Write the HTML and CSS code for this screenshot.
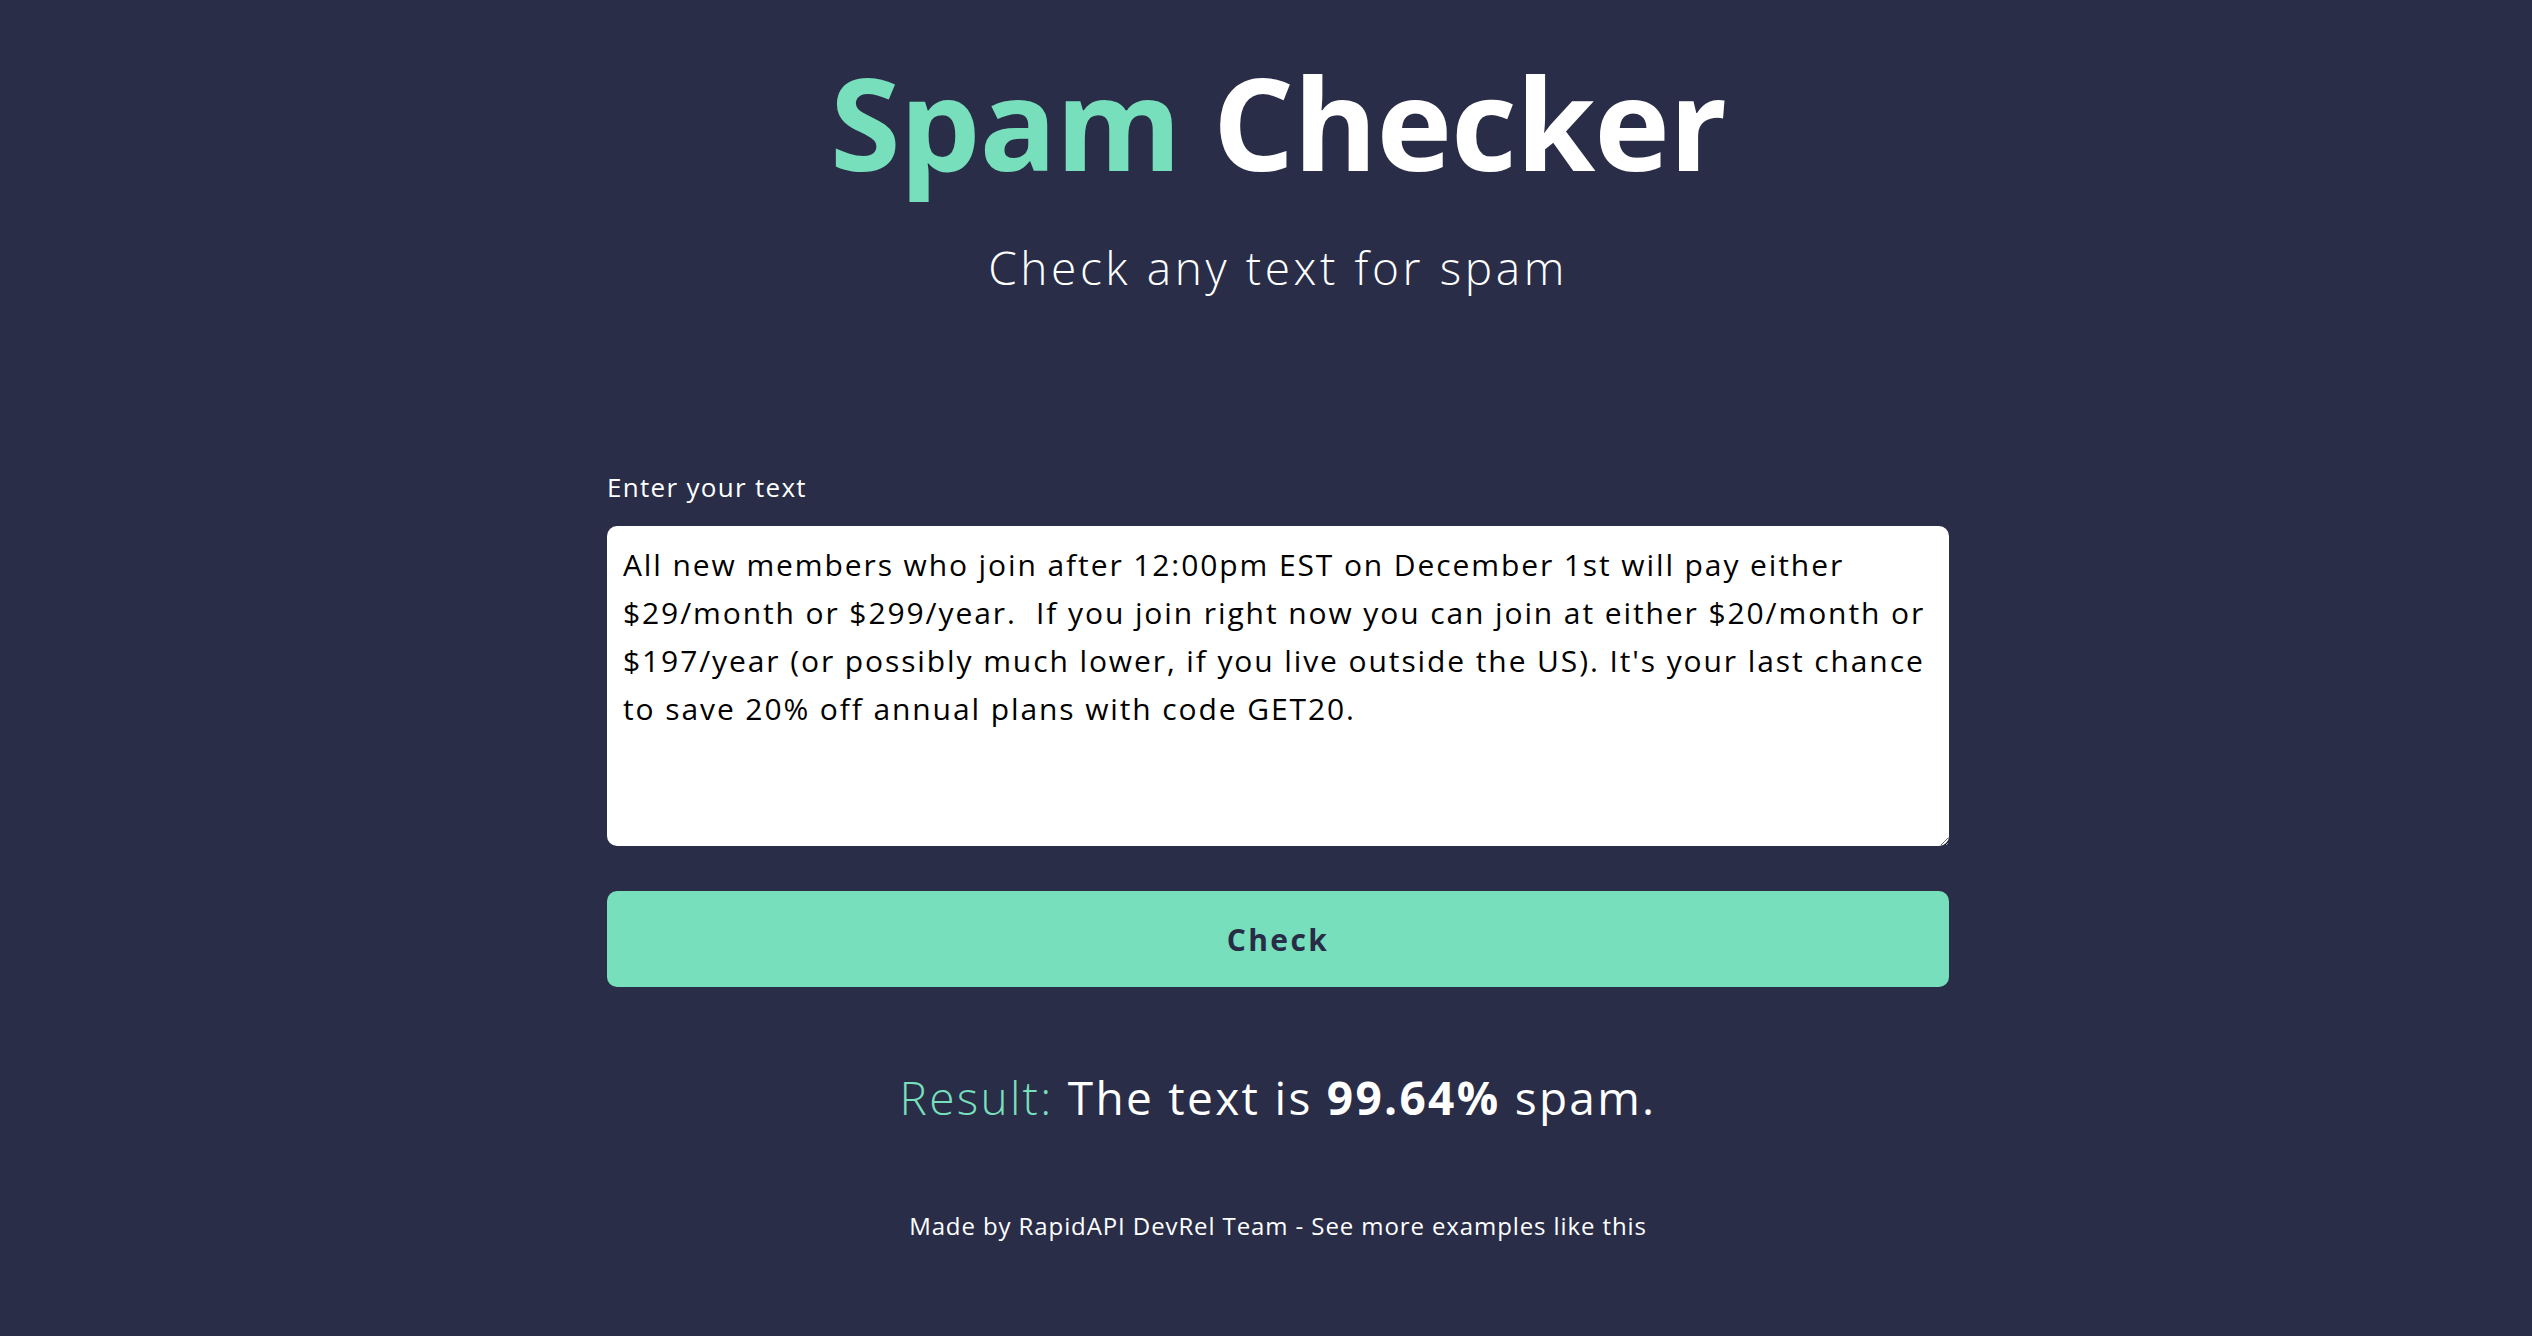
FILE: index.html
```html
<!DOCTYPE html>
<html lang="en">
<head>
<meta charset="utf-8">
<title>Spam Checker</title>
<link rel="stylesheet" href="styles.css">
</head>
<body>
<main class="page">
  <header class="hero">
    <h1 class="title"><span class="accent">Spam</span> Checker</h1>
    <p class="subtitle">Check any text for spam</p>
  </header>
  <form class="form">
    <label class="label" for="text">Enter your text</label>
    <textarea class="input" id="text">All new members who join after 12:00pm EST on December 1st will pay either $29/month or $299/year.  If you join right now you can join at either $20/month or $197/year (or possibly much lower, if you live outside the US). It's your last chance to save 20% off annual plans with code GET20.</textarea>
    <button class="button" type="button">Check</button>
  </form>
  <p class="result"><span class="accent">Result:</span> The text is <strong>99.64%</strong> spam.</p>
  <footer class="footer">Made by RapidAPI DevRel Team - See more examples like this</footer>
</main>
</body>
</html>
```

FILE: styles.css
```css
html, body {
  margin: 0;
  padding: 0;
  background: #292d47;
}
body {
  font-family: "Open Sans", "Noto Sans", sans-serif;
  color: #ffffff;
  min-height: 1336px;
}
.page {
  padding: 47px 0 0 24px;
  display: flex;
  flex-direction: column;
  align-items: center;
}
.hero {
  display: flex;
  flex-direction: column;
  align-items: center;
}
.title {
  margin: 0;
  font-size: 128px;
  line-height: 150px;
  font-weight: 700;
  letter-spacing: -1px;
}
.accent {
  color: #77dfbb;
}
.subtitle {
  margin: 40px 0 0;
  font-size: 46px;
  line-height: 60px;
  font-weight: 300;
  letter-spacing: 3.6px;
}
.form {
  width: 1342px;
  margin-top: 172px;
  display: flex;
  flex-direction: column;
}
.label {
  font-size: 26px;
  line-height: 36px;
  font-weight: 400;
  letter-spacing: 1.3px;
}
.input {
  display: block;
  margin-top: 21px;
  box-sizing: border-box;
  width: 1342px;
  height: 320px;
  padding: 15px 16px;
  border: none;
  border-radius: 10px;
  background: #ffffff;
  color: #000000;
  font-family: "Open Sans", "Noto Sans", sans-serif;
  font-size: 30px;
  line-height: 48px;
  letter-spacing: 1.9px;
  outline: none;
}
.button {
  margin-top: 45px;
  height: 96px;
  border: none;
  border-radius: 10px;
  background: #77dfbb;
  color: #282c46;
  font-family: "Open Sans", "Noto Sans", sans-serif;
  font-size: 30px;
  font-weight: 700;
  letter-spacing: 2.4px;
}
.result {
  margin: 80px 0 0;
  font-size: 46px;
  line-height: 60px;
  font-weight: 400;
  letter-spacing: 2.3px;
}
.result .accent {
  font-weight: 300;
}
.result strong {
  font-weight: 700;
}
.footer {
  margin-top: 83px;
  font-size: 24px;
  line-height: 32px;
  letter-spacing: 0.9px;
}
```
